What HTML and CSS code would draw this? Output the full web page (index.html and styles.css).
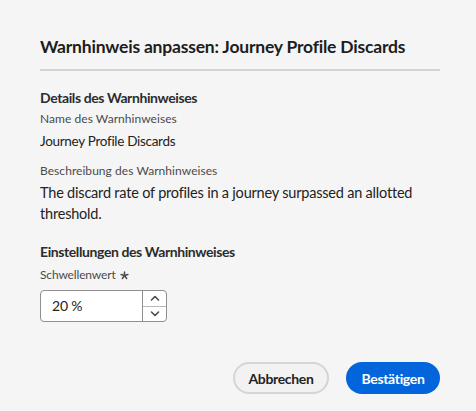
FILE: index.html
```html
<!DOCTYPE html>
<html lang="de">
<head>
<meta charset="utf-8">
<link rel="stylesheet" href="styles.css">
</head>
<body>
<div class="dialog">
  <h1 class="title">Warnhinweis anpassen: Journey Profile Discards</h1>
  <hr class="divider">
  <section class="section">
    <h2 class="section-title">Details des Warnhinweises</h2>
    <div class="field">
      <div class="label">Name des Warnhinweises</div>
      <div class="value">Journey Profile Discards</div>
    </div>
    <div class="field">
      <div class="label">Beschreibung des Warnhinweises</div>
      <div class="value desc">The discard rate of profiles in a journey surpassed an allotted threshold.</div>
    </div>
  </section>
  <section class="section settings">
    <h2 class="section-title">Einstellungen des Warnhinweises</h2>
    <div class="label req">Schwellenwert <svg class="star" width="9" height="9" viewBox="0 0 10 10" aria-label="erforderlich"><path d="M5 1 V5 M5 5 L8.8 3.8 M5 5 L7.4 8.3 M5 5 L2.6 8.3 M5 5 L1.2 3.8" stroke="#4b4b4b" stroke-width="1.7" stroke-linecap="round"/></svg></div>
    <div class="numfield">
      <div class="numvalue">20 %</div>
      <div class="stepper">
        <div class="step">
          <svg width="10" height="6" viewBox="0 0 10 6"><path d="M1.5 5 L5 1.5 L8.5 5" fill="none" stroke="#4b4b4b" stroke-width="1.6" stroke-linecap="round" stroke-linejoin="round"/></svg>
        </div>
        <div class="step">
          <svg width="10" height="6" viewBox="0 0 10 6"><path d="M1.5 1 L5 4.5 L8.5 1" fill="none" stroke="#4b4b4b" stroke-width="1.6" stroke-linecap="round" stroke-linejoin="round"/></svg>
        </div>
      </div>
    </div>
  </section>
  <div class="actions">
    <button class="btn secondary">Abbrechen</button>
    <button class="btn primary">Bestätigen</button>
  </div>
</div>
</body>
</html>
```
FILE: styles.css
```css
html, body {
  margin: 0;
  padding: 0;
  background: #f5f5f5;
}
body {
  font-family: "Lato", "Noto Sans", sans-serif;
  color: #222222;
}
.dialog {
  width: 400px;
  padding: 35px 36px 0 40px;
}
.title {
  margin: 0;
  font-size: 17.5px;
  line-height: 24px;
  font-weight: 700;
  color: #1d1d1d;
  letter-spacing: -0.2px;
}
.divider {
  margin: 10px 0 0 0;
  border: 0;
  height: 2px;
  background: #d3d3d3;
}
.section {
  margin-top: 17px;
}
.section-title {
  margin: 0;
  font-size: 14px;
  line-height: 20px;
  font-weight: 700;
  color: #2c2c2c;
  letter-spacing: -0.4px;
}
.field {
  margin-top: 3px;
}
.field + .field {
  margin-top: 12px;
}
.label {
  font-size: 12px;
  line-height: 16px;
  color: #4b4b4b;
  letter-spacing: 0.05px;
}
.value {
  margin-top: 4px;
  font-size: 13.5px;
  line-height: 20px;
  color: #222222;
  letter-spacing: -0.3px;
}
.desc {
  margin-top: 3px;
  font-size: 14.5px;
  line-height: 21px;
  letter-spacing: -0.2px;
}
.settings {
  margin-top: 18px;
}
.req {
  margin-top: 5px;
  display: flex;
  align-items: center;
  gap: 4px;
  letter-spacing: -0.15px;
}
.star {
  display: block;
}
.numfield {
  margin-top: 7px;
  width: 125px;
  height: 30px;
  display: flex;
  border: 1px solid #8f8f8f;
  border-radius: 4px;
  background: #ffffff;
}
.numvalue {
  flex: 1;
  padding-left: 11px;
  font-size: 14px;
  line-height: 30px;
  color: #222222;
  letter-spacing: -0.2px;
}
.stepper {
  width: 23px;
  display: flex;
  flex-direction: column;
  border-left: 1px solid #8f8f8f;
}
.step {
  flex: 1;
  display: flex;
  align-items: center;
  justify-content: center;
}
.step + .step {
  border-top: 1px solid #b8b8b8;
}
.actions {
  margin-top: 40px;
  display: flex;
  justify-content: flex-end;
  gap: 17px;
}
.btn {
  height: 32px;
  border-radius: 16px;
  font-family: "Lato", "Noto Sans", sans-serif;
  font-size: 14px;
  font-weight: 700;
  letter-spacing: -0.35px;
  padding: 0;
}
.secondary {
  width: 96px;
  background: #f2f2f2;
  border: 2px solid #d5d5d5;
  color: #222222;
}
.primary {
  width: 94px;
  background: #0265dc;
  border: 0;
  color: #ffffff;
}
```
